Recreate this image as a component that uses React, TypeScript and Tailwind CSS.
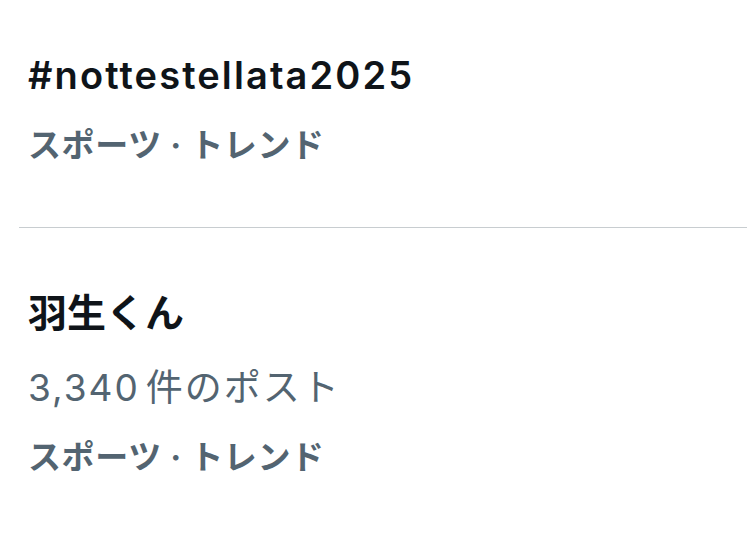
export default function App() {
  const font = { fontFamily: 'Inter, "Noto Sans CJK JP", sans-serif' };
  return (
    <div className="w-[747px] h-[535px] bg-white overflow-hidden" style={font}>
      <div className="pl-[28px] pt-[53px]">
        <div className="text-[38px] leading-[44px] font-semibold text-[#0f1419] tracking-[2.1px]">#nottestellata2025</div>
        <div className="mt-[28px] text-[33px] leading-[40px] font-bold text-[#536471] tracking-[0.6px]">スポーツ · トレンド</div>
      </div>
      <div className="ml-[19px] mt-[62px] h-px bg-[#c8cdd0]" />
      <div className="pl-[28px] pt-[63px]">
        <div className="text-[39px] leading-[44px] font-bold text-[#0f1419]">羽生くん</div>
        <div className="mt-[31px] text-[37px] leading-[44px] font-normal text-[#536471] tracking-[2px]">
          <span className="mr-[6px]">3,340</span>件のポスト
        </div>
        <div className="mt-[27px] text-[33px] leading-[40px] font-bold text-[#536471] tracking-[0.6px]">スポーツ · トレンド</div>
      </div>
    </div>
  );
}
